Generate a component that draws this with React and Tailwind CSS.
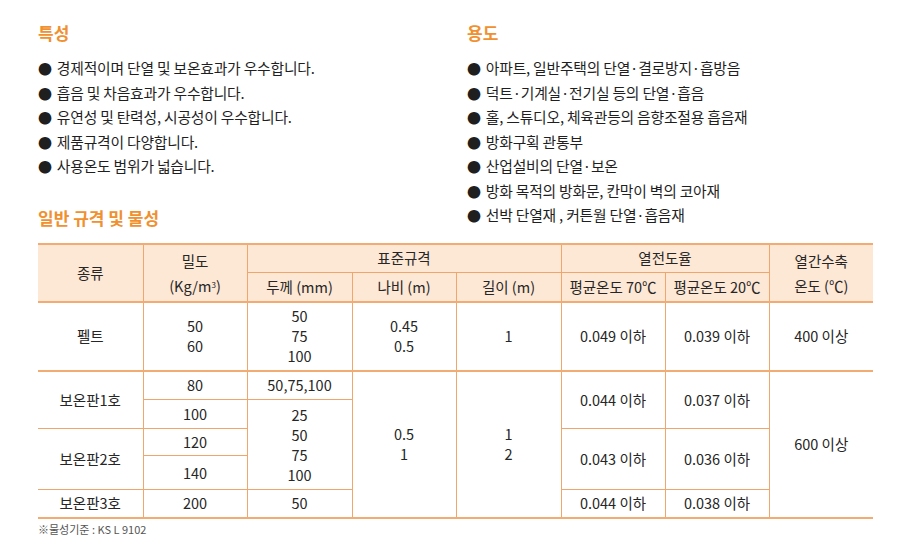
import clsx from "clsx";

const features = [
  "경제적이며 단열 및 보온효과가 우수합니다.",
  "흡음 및 차음효과가 우수합니다.",
  "유연성 및 탄력성, 시공성이 우수합니다.",
  "제품규격이 다양합니다.",
  "사용온도 범위가 넓습니다.",
];

const uses = [
  "아파트, 일반주택의 단열·결로방지·흡방음",
  "덕트·기계실·전기실 등의 단열·흡음",
  "홀, 스튜디오, 체육관등의 음향조절용 흡음재",
  "방화구획 관통부",
  "산업설비의 단열·보온",
  "방화 목적의 방화문, 칸막이 벽의 코아재",
  "선박 단열재 , 커튼월 단열·흡음재",
];

const BulletList = ({ items }) => (
  <ul className="mt-[12px] text-[14.8px] leading-[24.5px] tracking-[-0.2px] text-[#1f1f1f]">
    {items.map((item) => (
      <li className="flex items-center" key={item}>
        <span className="mr-[5px] text-[14px]">●</span>
        <span>{item}</span>
      </li>
    ))}
  </ul>
);

// cell helpers: l = left rule, b = bottom rule ("thin" | "thick")
const Td = ({ l = true, b, head, className, children, ...rest }) => {
  const Tag = head ? "th" : "td";
  return (
    <Tag
      className={clsx(
        "p-0 text-center align-middle font-normal",
        l && "border-l border-l-[#f0a66c]",
        b === "thin" && "border-b border-b-[#efa56b]",
        b === "thick" && "border-b-2 border-b-[#f2ab72]",
        className,
      )}
      {...rest}
    >
      {children}
    </Tag>
  );
};

const App = () => {
  return (
    <div className="min-h-[537px] w-[917px] bg-white pl-[38px] pt-[22px] font-['Noto_Sans_CJK_KR','Noto_Sans',sans-serif] text-[#262626]">
      <div className="flex">
        <div className="w-[429px]">
          <h2 className="text-[17px] font-bold leading-[22px] text-[#f0902f]">
            특성
          </h2>
          <BulletList items={features} />
          <h2 className="mt-[28px] text-[17px] font-bold leading-[22px] text-[#f0902f]">
            일반 규격 및 물성
          </h2>
        </div>
        <div>
          <h2 className="text-[17px] font-bold leading-[22px] text-[#f0902f]">
            용도
          </h2>
          <BulletList items={uses} />
        </div>
      </div>

      <table className="mt-[14px] w-[835px] table-fixed border-collapse text-[14.5px] leading-[20px]">
        <colgroup>
          <col className="w-[105px]" />
          <col className="w-[104px]" />
          <col className="w-[105px]" />
          <col className="w-[104px]" />
          <col className="w-[105px]" />
          <col className="w-[104px]" />
          <col className="w-[104px]" />
          <col className="w-[104px]" />
        </colgroup>
        <thead className="bg-[#fde7d5]">
          <tr className="h-[29px] border-t-2 border-t-[#f2ab72]">
            <Td b="thick" head l={false} rowSpan={2}>
              종류
            </Td>
            <Td b="thick" className="leading-[25px]" head rowSpan={2}>
              밀도
              <br />
              (Kg/m<sup className="text-[8px]">3</sup>)
            </Td>
            <Td b="thin" colSpan={3} head>
              표준규격
            </Td>
            <Td b="thin" colSpan={2} head>
              열전도율
            </Td>
            <Td b="thick" className="leading-[25px]" head rowSpan={2}>
              열간수축
              <br />
              온도 (℃)
            </Td>
          </tr>
          <tr className="h-[29px]">
            <Td b="thick" head>
              두께 (mm)
            </Td>
            <Td b="thick" head>
              나비 (m)
            </Td>
            <Td b="thick" head>
              길이 (m)
            </Td>
            <Td b="thick" head>
              평균온도 70℃
            </Td>
            <Td b="thick" head>
              평균온도 20℃
            </Td>
          </tr>
        </thead>
        <tbody>
          <tr className="h-[69px]">
            <Td b="thick" l={false}>
              펠트
            </Td>
            <Td b="thick">
              50
              <br />
              60
            </Td>
            <Td b="thick">
              50
              <br />
              75
              <br />
              100
            </Td>
            <Td b="thick">
              0.45
              <br />
              0.5
            </Td>
            <Td b="thick">1</Td>
            <Td b="thick">0.049 이하</Td>
            <Td b="thick">0.039 이하</Td>
            <Td b="thick">400 이상</Td>
          </tr>
          <tr className="h-[29px]">
            <Td b="thin" l={false} rowSpan={2}>
              보온판1호
            </Td>
            <Td b="thin">80</Td>
            <Td b="thin">50,75,100</Td>
            <Td b="thick" rowSpan={5}>
              0.5
              <br />1
            </Td>
            <Td b="thick" rowSpan={5}>
              1
              <br />2
            </Td>
            <Td b="thin" rowSpan={2}>
              0.044 이하
            </Td>
            <Td b="thin" rowSpan={2}>
              0.037 이하
            </Td>
            <Td b="thick" rowSpan={5}>
              600 이상
            </Td>
          </tr>
          <tr className="h-[29px]">
            <Td b="thin">100</Td>
            <Td b="thin" rowSpan={3}>
              25
              <br />
              50
              <br />
              75
              <br />
              100
            </Td>
          </tr>
          <tr className="h-[27px]">
            <Td b="thin" l={false} rowSpan={2}>
              보온판2호
            </Td>
            <Td b="thin">120</Td>
            <Td b="thin" rowSpan={2}>
              0.043 이하
            </Td>
            <Td b="thin" rowSpan={2}>
              0.036 이하
            </Td>
          </tr>
          <tr className="h-[34px]">
            <Td b="thin">140</Td>
          </tr>
          <tr className="h-[28px]">
            <Td b="thick" l={false}>
              보온판3호
            </Td>
            <Td b="thick">200</Td>
            <Td b="thick">50</Td>
            <Td b="thick">0.044 이하</Td>
            <Td b="thick">0.038 이하</Td>
          </tr>
        </tbody>
      </table>

      <p className="mt-[3px] text-[11px] leading-[14px] text-[#555]">
        ※물성기준 : KS L 9102
      </p>
    </div>
  );
};

export default App;
